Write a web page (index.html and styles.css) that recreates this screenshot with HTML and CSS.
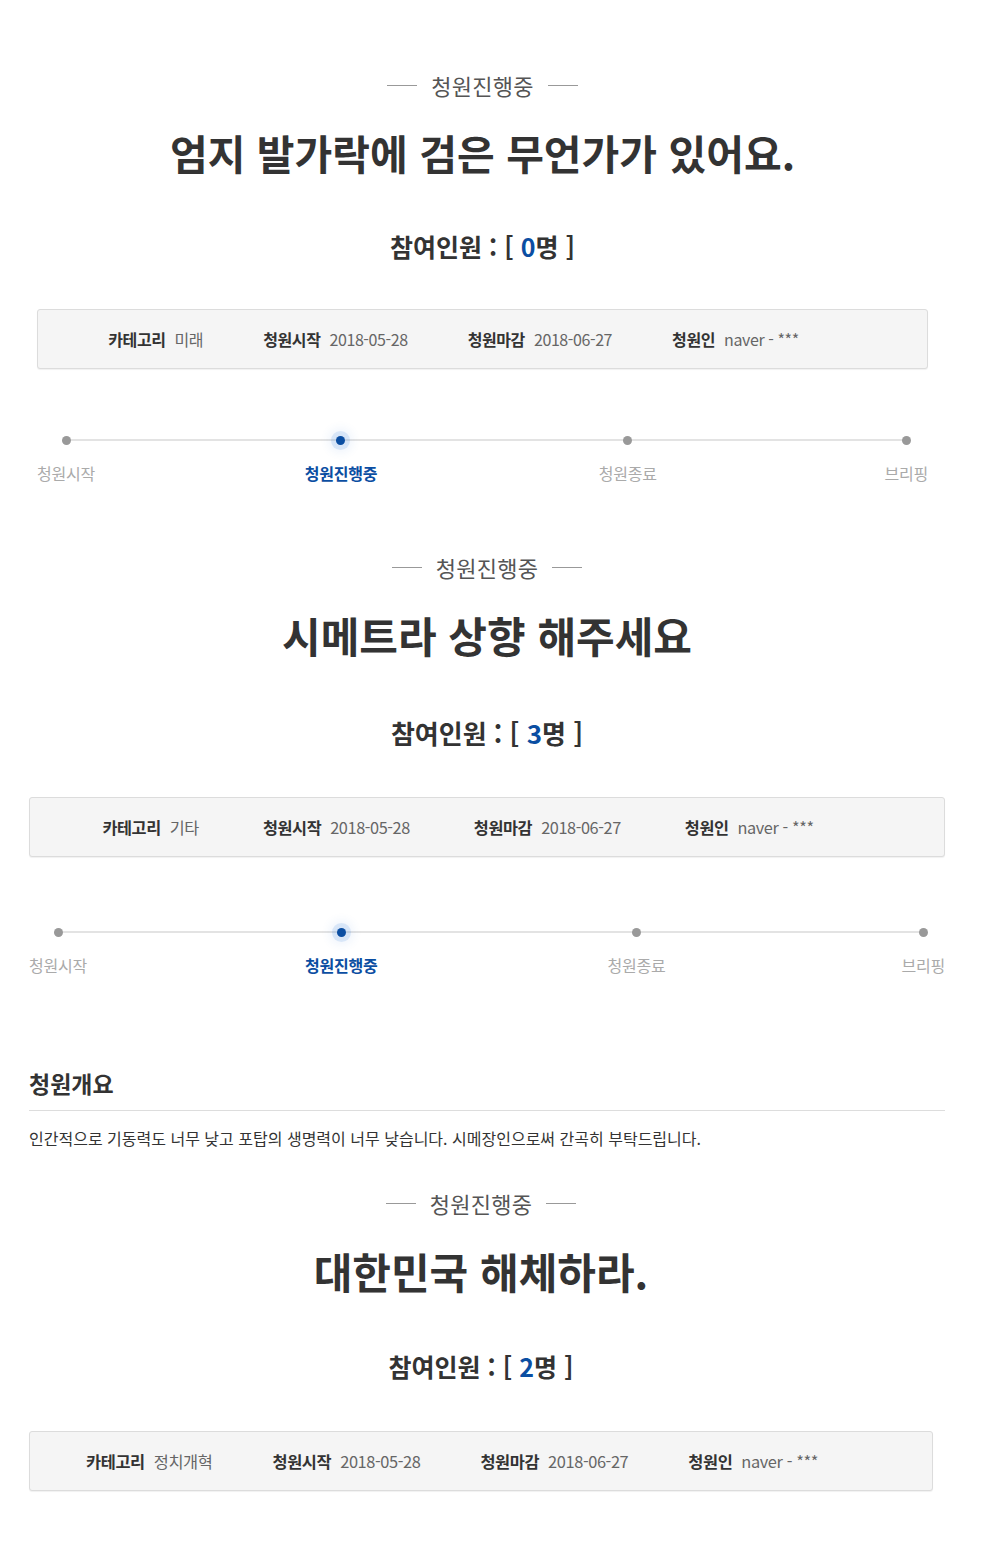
FILE: index.html
```html
<!DOCTYPE html>
<html lang="ko">
<head>
    <meta charset="UTF-8">
    <meta name="viewport" content="width=device-width, initial-scale=1.0">
    <title>청원 목록</title>
    <link rel="stylesheet" href="styles.css">
</head>
<body>
    <!-- 청원 1 -->
    <div class="petition petition-1">
        <p class="state">청원진행중</p>
        <h1 class="title">엄지 발가락에 검은 무언가가 있어요.</h1>
        <p class="count">참여인원 : [ <span class="num">0</span>명 ]</p>

        <ul class="info">
            <li><b>카테고리</b><span>미래</span></li>
            <li><b>청원시작</b><span>2018-05-28</span></li>
            <li><b>청원마감</b><span>2018-06-27</span></li>
            <li><b>청원인</b><span>naver - ***</span></li>
        </ul>

        <ol class="steps">
            <li><i class="dot"></i>청원시작</li>
            <li class="on"><i class="dot"></i>청원진행중</li>
            <li><i class="dot"></i>청원종료</li>
            <li><i class="dot"></i>브리핑</li>
        </ol>
    </div>

    <!-- 청원 2 -->
    <div class="petition petition-2">
        <p class="state">청원진행중</p>
        <h1 class="title">시메트라 상향 해주세요</h1>
        <p class="count">참여인원 : [ <span class="num">3</span>명 ]</p>

        <ul class="info">
            <li><b>카테고리</b><span>기타</span></li>
            <li><b>청원시작</b><span>2018-05-28</span></li>
            <li><b>청원마감</b><span>2018-06-27</span></li>
            <li><b>청원인</b><span>naver - ***</span></li>
        </ul>

        <ol class="steps">
            <li><i class="dot"></i>청원시작</li>
            <li class="on"><i class="dot"></i>청원진행중</li>
            <li><i class="dot"></i>청원종료</li>
            <li><i class="dot"></i>브리핑</li>
        </ol>

        <div class="overview">
            <h2>청원개요</h2>
            <p>인간적으로 기동력도 너무 낮고 포탑의 생명력이 너무 낮습니다. 시메장인으로써 간곡히 부탁드립니다.</p>
        </div>
    </div>

    <!-- 청원 3 -->
    <div class="petition petition-3">
        <p class="state">청원진행중</p>
        <h1 class="title">대한민국 해체하라.</h1>
        <p class="count">참여인원 : [ <span class="num">2</span>명 ]</p>

        <ul class="info">
            <li><b>카테고리</b><span>정치개혁</span></li>
            <li><b>청원시작</b><span>2018-05-28</span></li>
            <li><b>청원마감</b><span>2018-06-27</span></li>
            <li><b>청원인</b><span>naver - ***</span></li>
        </ul>
    </div>
</body>
</html>
```

FILE: styles.css
```css
:root {
    --text: #333333;
    --muted: #666666;
    --light: #aaaaaa;
    --blue: #0b4ea2;
}

body {
    margin: 0;
    background: #ffffff;
    color: var(--text);
    font-family: "Noto Sans CJK KR", "Noto Sans", sans-serif;
}

ul, ol {
    list-style: none;
    margin: 0;
    padding: 0;
}

.petition {
    box-sizing: border-box;
}

.petition-1 {
    margin-left: 37px;
    width: 891px;
    padding-top: 70px;
}

.petition-2 {
    margin-left: 29px;
    width: 916px;
    padding-top: 68px;
}

.petition-3 {
    margin-left: 29px;
    width: 904px;
    padding-top: 38px;
    padding-bottom: 40px;
}

/* 상태 라벨 */
.state {
    display: flex;
    justify-content: center;
    align-items: center;
    gap: 14px;
    margin: 0;
    font-size: 22px;
    line-height: 30px;
    color: #555;
    letter-spacing: 0.3px;
}

.state::before,
.state::after {
    content: "";
    width: 30px;
    height: 1px;
    background: #999;
}

.title {
    margin: 27px 0 0;
    font-size: 41px;
    line-height: 50px;
    font-weight: 700;
    text-align: center;
    color: #333;
}

.petition-2 .title,
.petition-3 .title {
    margin-top: 28px;
    font-size: 42px;
}

.count {
    margin: 51px 0 0;
    font-size: 25px;
    line-height: 36px;
    font-weight: 700;
    text-align: center;
}

.petition-2 .count { margin-top: 55px; font-size: 26px; }
.petition-3 .count { margin-top: 52px; }

.count .num {
    color: var(--blue);
}

/* 정보 박스 */
.info {
    display: flex;
    justify-content: center;
    align-items: center;
    gap: 60px;
    height: 58px;
    margin-top: 45px;
    padding-right: 58px;
    background: #f5f5f5;
    border: 1px solid #dcdcdc;
    border-radius: 3px;
    box-shadow: 0 1px 1px rgba(0, 0, 0, 0.06);
    font-size: 16px;
    letter-spacing: -0.4px;
}

.petition-2 .info {
    margin-top: 46px;
    gap: 64px;
    font-size: 16.3px;
}

.petition-3 .info {
    margin-top: 47px;
    gap: 60px;
    font-size: 16.4px;
}

.info li {
    display: flex;
    gap: 9px;
}

.info b {
    font-weight: 700;
    color: #333;
}

.info span {
    color: var(--muted);
}

/* 진행 단계 */
.steps {
    position: relative;
    display: flex;
    justify-content: space-between;
    margin-top: 61px;
    font-size: 16px;
    line-height: 22px;
    letter-spacing: -0.2px;
    color: var(--light);
}

.petition-2 .steps { margin-top: 65px; }

.steps::before {
    content: "";
    position: absolute;
    top: 9px;
    left: 30px;
    right: 23px;
    height: 2px;
    background: #e3e3e3;
}

.steps li {
    display: flex;
    flex-direction: column;
    align-items: center;
    gap: 12px;
}

.steps li:nth-child(2) { margin-left: -12px; }
.steps li:nth-child(3) { margin-right: 6px; }

.dot {
    position: relative;
    width: 9px;
    height: 9px;
    margin-top: 6px;
    margin-bottom: 5px;
    border-radius: 50%;
    background: #999;
}

.steps .on {
    color: var(--blue);
    font-weight: 700;
}

.steps .on .dot {
    background: var(--blue);
    box-shadow: 0 0 0 5px rgba(60, 130, 220, 0.14), 0 0 8px 8px rgba(60, 130, 220, 0.08);
}

/* 청원개요 */
.overview {
    margin-top: 92px;
}

.overview h2 {
    margin: 0;
    padding-bottom: 12px;
    border-bottom: 1px solid #dddddd;
    font-size: 23px;
    line-height: 30px;
    font-weight: 700;
}

.overview p {
    margin: 15px 0 0;
    font-size: 16px;
    line-height: 24px;
    color: #333;
}
```
